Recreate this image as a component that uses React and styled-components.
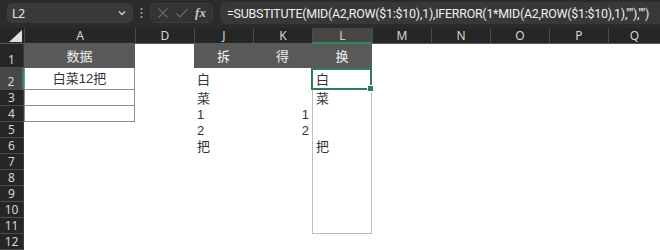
import React from "react";
import styled, { createGlobalStyle } from "styled-components";

const GlobalStyle = createGlobalStyle`
  html, body {
    margin: 0;
    padding: 0;
    background: #ffffff;
  }
  body {
    font-family: "Noto Sans", "Noto Sans CJK SC", sans-serif;
  }
`;

const Page = styled.div`
  width: 660px;
  height: 250px;
  overflow: hidden;
  background: #ffffff;
`;

const FormulaBar = styled.div`
  height: 28px;
  background: #2b2b2b;
  display: flex;
  align-items: center;
  padding: 0 0 2px 7px;
  box-sizing: border-box;
`;

const NameBox = styled.div`
  width: 126px;
  height: 20px;
  background: #3a3a3a;
  border-radius: 5px;
  display: flex;
  align-items: center;
  justify-content: space-between;
  padding: 0 6px 0 5px;
  box-sizing: border-box;
  color: #e6e6e6;
  font-size: 12px;
`;

const Dots = styled.div`
  width: 17px;
  display: flex;
  justify-content: center;
`;

const ActionBox = styled.div`
  width: 63px;
  height: 20px;
  background: #333333;
  border: 1px solid #3d3d3d;
  border-radius: 5px;
  box-sizing: border-box;
  display: flex;
  align-items: center;
  justify-content: space-around;
  padding: 0 3px;
`;

const Fx = styled.span`
  font-family: "Liberation Serif", serif;
  font-style: italic;
  font-weight: bold;
  font-size: 13px;
  color: #c8c8c8;
`;

const FormulaBox = styled.div`
  flex: 1;
  margin-left: 7px;
  height: 22px;
  background: #383838;
  border-radius: 5px 0 0 5px;
  display: flex;
  align-items: center;
  padding-left: 7px;
  color: #f0f0f0;
  font-family: Roboto, "Liberation Sans", sans-serif;
  font-size: 12.4px;
  letter-spacing: -0.22px;
  white-space: nowrap;
  overflow: hidden;
`;

const Sheet = styled.div`
  display: grid;
  grid-template-columns: 24px 111px 59px 59px 59px 60px 59px 59px 59px 59px 52px;
  grid-template-rows: 16px 24px 22px repeat(10, 16px);
  position: relative;
`;

const Corner = styled.div`
  background: #262626;
  border-bottom: 1px solid #5a5a5a;
  position: relative;
  box-sizing: border-box;
`;

const ColHead = styled.div`
  background: ${(p) => (p.$active ? "#474747" : "#262626")};
  color: #d4d4d4;
  font-size: 12px;
  display: flex;
  align-items: center;
  justify-content: center;
  border-left: 1px solid #4c4c4c;
  border-bottom: ${(p) => (p.$active ? "2px solid #2e8b57" : "1px solid #5a5a5a")};
  box-sizing: border-box;
`;

const RowHead = styled.div`
  background: ${(p) => (p.$active ? "#474747" : "#262626")};
  color: #d4d4d4;
  font-size: 12px;
  display: flex;
  align-items: flex-end;
  justify-content: center;
  line-height: 15px;
  border-bottom: 1px solid #4c4c4c;
  border-right: ${(p) => (p.$active ? "2px solid #2e8b57" : "1px solid #3a3a3a")};
  box-sizing: border-box;
`;

const Cell = styled.div`
  background: ${(p) => (p.$dark ? "#595959" : "#ffffff")};
  color: ${(p) => (p.$dark ? "#f2f2f2" : "#333333")};
  font-family: "Liberation Sans", "Noto Sans CJK SC", sans-serif;
  font-size: 13px;
  line-height: 15px;
  display: flex;
  align-items: center;
  justify-content: ${(p) => p.$align || "flex-start"};
  padding: 0 3px;
  box-sizing: border-box;
  white-space: nowrap;
  overflow: hidden;
  border-top: ${(p) => (p.$bt ? `1px solid ${p.$bc}` : "none")};
  border-bottom: ${(p) => (p.$bb ? `1px solid ${p.$bc}` : "none")};
  border-left: ${(p) => (p.$bl ? `1px solid ${p.$bc}` : "none")};
  border-right: ${(p) => (p.$br ? `1px solid ${p.$bc}` : "none")};
`;

const Selection = styled.div`
  position: absolute;
  left: 311px;
  top: 40px;
  width: 61px;
  height: 22px;
  border: 2px solid #2e7d57;
  box-sizing: border-box;
  pointer-events: none;
`;

const Handle = styled.div`
  position: absolute;
  right: -4px;
  bottom: -4px;
  width: 5px;
  height: 5px;
  background: #2e7d57;
  border: 1px solid #ffffff;
`;

const columns = ["A", "D", "J", "K", "L", "M", "N", "O", "P", "Q"];

const tableGray = "#8c8c8c";
const lBorder = "#b9bbd6";

function cellProps(col, row) {
  const p = {};
  if (row === 1) {
    if (["A", "J", "K", "L"].includes(col)) {
      p.$dark = true;
      p.$align = "center";
      if (col === "A") p.$text = "数据";
      if (col === "J") p.$text = "拆";
      if (col === "K") p.$text = "得";
      if (col === "L") p.$text = "换";
    }
  }
  if (col === "A" && row >= 2 && row <= 4) {
    p.$bc = tableGray;
    p.$bl = true;
    p.$br = true;
    p.$bb = true;
    p.$align = "center";
    if (row === 2) p.$text = "白菜12把";
  }
  const jVals = { 2: "白", 3: "菜", 4: "1", 5: "2", 6: "把" };
  if (col === "J" && jVals[row]) p.$text = jVals[row];
  const kVals = { 4: "1", 5: "2" };
  if (col === "K" && kVals[row]) {
    p.$text = kVals[row];
    p.$align = "flex-end";
  }
  const lVals = { 2: "白", 3: "菜", 6: "把" };
  if (col === "L" && row >= 2 && row <= 11) {
    p.$bc = lBorder;
    p.$bl = true;
    p.$br = true;
    if (row === 2) p.$bt = true;
    if (row === 11) p.$bb = true;
    if (lVals[row]) p.$text = lVals[row];
  }
  return p;
}

function ChevronDown() {
  return (
    <svg width="10" height="10" viewBox="0 0 10 10">
      <path d="M2 3.5 L5 6.5 L8 3.5" fill="none" stroke="#cfcfcf" strokeWidth="1.3" />
    </svg>
  );
}

function App() {
  const rows = Array.from({ length: 12 }, (_, i) => i + 1);
  return (
    <Page>
      <GlobalStyle />
      <FormulaBar>
        <NameBox>
          <span>L2</span>
          <ChevronDown />
        </NameBox>
        <Dots>
          <svg width="3" height="12" viewBox="0 0 3 12">
            <circle cx="1.5" cy="2" r="1.1" fill="#a0a0a0" />
            <circle cx="1.5" cy="6" r="1.1" fill="#a0a0a0" />
            <circle cx="1.5" cy="10" r="1.1" fill="#a0a0a0" />
          </svg>
        </Dots>
        <ActionBox>
          <svg width="12" height="12" viewBox="0 0 12 12">
            <path d="M1.5 1.5 L10.5 10.5 M10.5 1.5 L1.5 10.5" stroke="#6a6a6a" strokeWidth="1.2" />
          </svg>
          <svg width="14" height="12" viewBox="0 0 14 12">
            <path d="M1.5 6.5 L5 10 L12.5 2" fill="none" stroke="#6a6a6a" strokeWidth="1.2" />
          </svg>
          <Fx>fx</Fx>
        </ActionBox>
        <FormulaBox>=SUBSTITUTE(MID(A2,ROW($1:$10),1),IFERROR(1*MID(A2,ROW($1:$10),1),""),"")</FormulaBox>
      </FormulaBar>
      <Sheet>
        <Corner>
          <svg width="24" height="16" viewBox="0 0 24 16" style={{ position: "absolute", left: 0, top: 0 }}>
            <polygon points="9,14 22,14 22,2" fill="#e0e0e0" />
          </svg>
        </Corner>
        {columns.map((c) => (
          <ColHead key={c} $active={c === "L"}>
            {c}
          </ColHead>
        ))}
        {rows.map((r) => (
          <React.Fragment key={r}>
            <RowHead $active={r === 2}>{r}</RowHead>
            {columns.map((c) => {
              const p = cellProps(c, r);
              return (
                <Cell key={c + r} {...p}>
                  {p.$text}
                </Cell>
              );
            })}
          </React.Fragment>
        ))}
        <Selection>
          <Handle />
        </Selection>
      </Sheet>
    </Page>
  );
}

export default App;
